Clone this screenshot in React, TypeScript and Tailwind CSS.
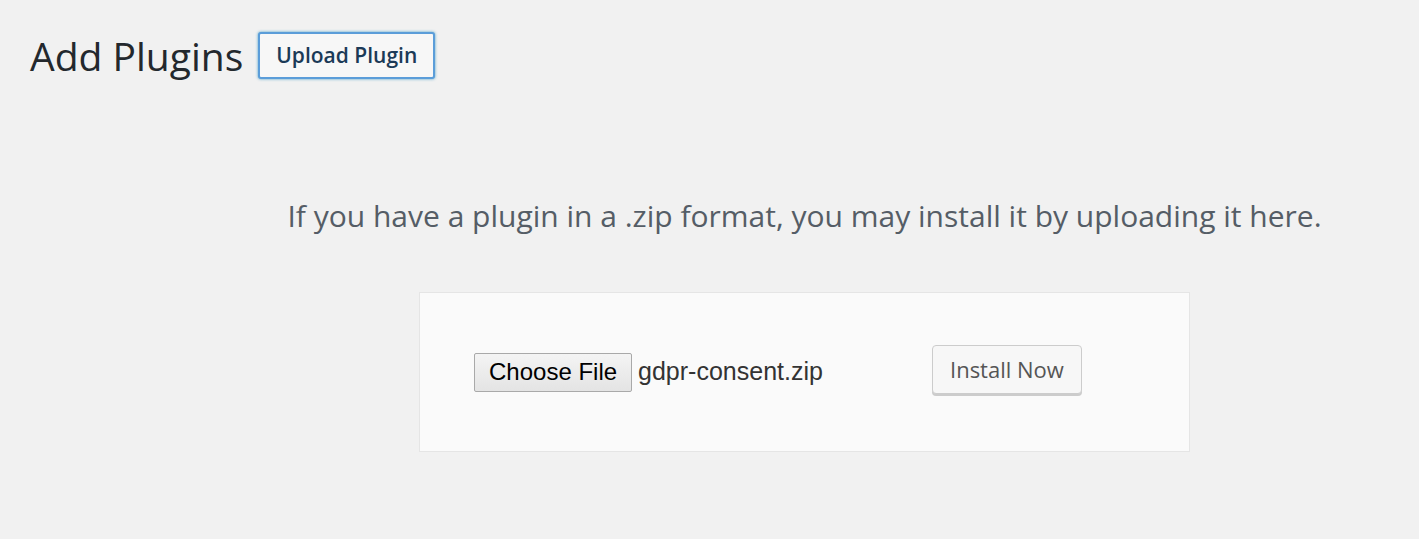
export default function App() {
  return (
    <div className="min-h-[539px] w-full bg-[#f1f1f1] font-['Open_Sans',sans-serif]">
      {/* Page title */}
      <div className="flex items-center pl-[30px] pt-[32px]">
        <h1 className="text-[39px] leading-[47px] text-[#23282d]">Add Plugins</h1>
        <button className="ml-[15px] h-[47px] rounded-[3px] border-2 border-[#5b9dd9] bg-[#f7f7f7] px-[16px] text-[21px] font-semibold text-[#1b3a57] shadow-[0_0_3px_rgba(30,140,190,0.8)]">
          Upload Plugin
        </button>
      </div>

      {/* Upload area */}
      <div className="ml-[190px]">
        <p className="mt-[117px] text-center text-[30px] leading-[40px] text-[#555d66]">
          If you have a plugin in a .zip format, you may install it by uploading it here.
        </p>
        <div className="mx-auto mt-[56px] flex h-[160px] w-[771px] items-center border border-[#e5e5e5] bg-[#fafafa] pl-[54px]">
          <div className="flex w-[458px] items-center">
            <span className="flex h-[39px] items-center rounded-[2px] border border-[#a9a9a9] bg-gradient-to-b from-[#f4f4f4] to-[#e4e4e4] px-[14px] font-['Liberation_Sans',sans-serif] text-[24px] text-black">
              Choose File
            </span>
            <span className="ml-[6px] font-['Liberation_Sans',sans-serif] text-[25px] text-[#333]">gdpr-consent.zip</span>
          </div>
          <button className="mb-[5px] h-[49px] rounded-[4px] border border-[#ccc] bg-[#f7f7f7] px-[17px] text-[22px] text-[#555] shadow-[0_2px_0_#ccc]">
            Install Now
          </button>
        </div>
      </div>
    </div>
  );
}
